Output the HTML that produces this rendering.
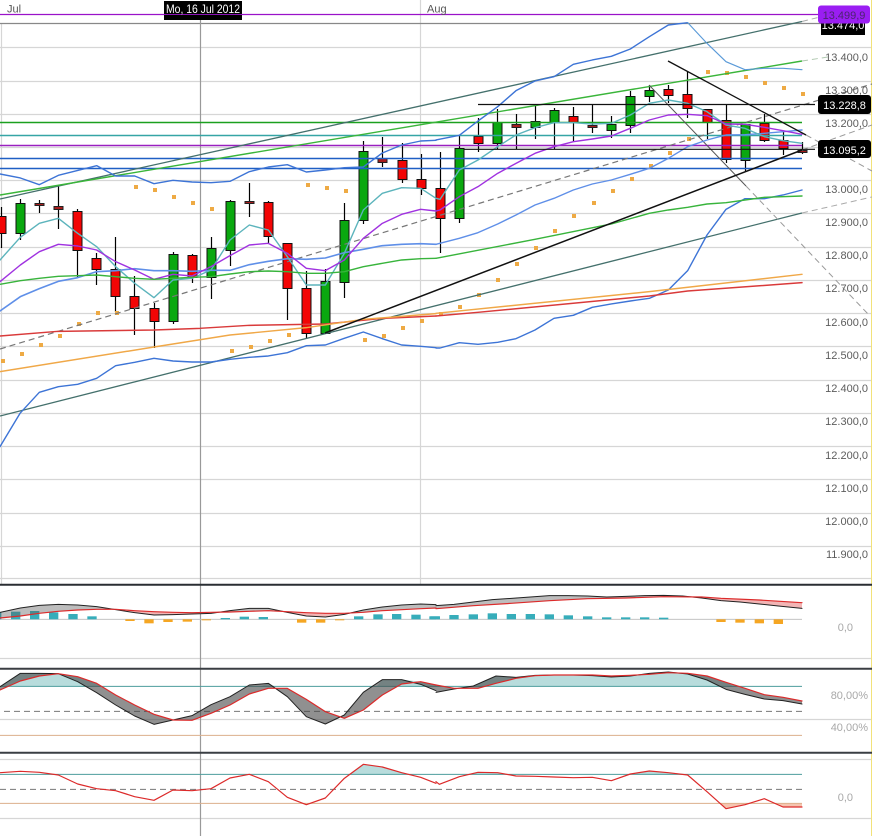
<!DOCTYPE html>
<html>
<head>
<meta charset="utf-8">
<style>
html,body{margin:0;padding:0;background:#fff;width:872px;height:836px;overflow:hidden}
svg{display:block;font-family:"Liberation Sans",sans-serif}
.a{fill:#5c5c5c;font-size:11px;text-anchor:end}
.b{fill:#a8a8a8;font-size:11px;text-anchor:end}
.l{fill:none;stroke-linejoin:round;stroke-linecap:round}
</style>
</head>
<body>
<svg width="872" height="836" viewBox="0 0 872 836">
<rect width="872" height="836" fill="#fff"/>
<!-- grid -->
<path stroke="#d6d6d6" stroke-width="1.2" fill="none" d="M0 47.5H872M0 81.5H872M0 114.5H872M0 147.5H872M0 180.5H872M0 213.5H872M0 247.5H872M0 280.5H872M0 313.5H872M0 346.5H872M0 380.5H872M0 413.5H872M0 446.5H872M0 479.5H872M0 513.5H872M0 546.5H872M0 578.5H872M0 658.5H872M0 719.5H872M0 759.5H872M0 818.5H872M1.5 24V584M420.5 0V584"/>
<path stroke="#f2e27a" d="M871.5 0V836"/>
<path fill="none" stroke="#888" stroke-width="1.2" d="M0 23.5H822"/>
<!-- crosshair -->
<path stroke="#999" stroke-width="1.2" d="M200.5 20V836"/>
<!-- candles -->
<path stroke="#000" stroke-width="1.2" fill="none" d="M1.5 207V248M20.5 199V240M39.5 200V213M58.5 185V229M77.5 209V278M96.5 253V285M115.5 237V312M134.5 276V335M154.5 303V348M173.5 252V324M192.5 254V283M211.5 237V299M230.5 200V266M249.5 183V217M268.5 201V243M287.5 243V320M306.5 271V338M325.5 269V333M344.5 203V298M363.5 141V224M382.5 137V167M402.5 143V183M421.5 154V195M440.5 152V253M459.5 136V223M478.5 118V152M497.5 109V149M516.5 114V149M535.5 105V139M554.5 108V149M573.5 107V142M592.5 105V133M611.5 116V138M630.5 91V133M649.5 85V102M668.5 85V103M687.5 71V118M707.5 109V139M726.5 104V163M745.5 124V172M764.5 114V142M783.5 132V155M802.5 142V154"/>
<g fill="#f30505" stroke="#111">
<rect x="-3" y="216.5" width="9" height="17"/><rect x="73" y="211.5" width="9" height="39"/><rect x="92" y="258.5" width="9" height="11"/><rect x="111" y="269.5" width="9" height="27"/><rect x="130" y="296.5" width="9" height="12"/><rect x="150" y="308.5" width="9" height="13"/><rect x="188" y="255.5" width="9" height="22"/><rect x="264" y="202.5" width="9" height="34"/><rect x="283" y="243.5" width="9" height="45"/><rect x="302" y="288.5" width="9" height="45"/><rect x="398" y="160.5" width="9" height="19"/><rect x="417" y="179.5" width="9" height="9"/><rect x="436" y="188.5" width="9" height="30"/><rect x="474" y="136.5" width="9" height="7"/><rect x="569" y="116.5" width="9" height="6"/><rect x="664" y="89.5" width="9" height="6"/><rect x="683" y="94.5" width="9" height="14"/><rect x="703" y="109.5" width="9" height="13"/><rect x="722" y="120.5" width="9" height="39"/><rect x="760" y="123.5" width="9" height="17"/><rect x="779" y="140.5" width="9" height="8"/>
</g>
<g fill="#0aa80f" stroke="#111">
<rect x="16" y="203.5" width="9" height="30"/><rect x="169" y="254.5" width="9" height="67"/><rect x="207" y="248.5" width="9" height="29"/><rect x="226" y="201.5" width="9" height="49"/><rect x="321" y="281.5" width="9" height="52"/><rect x="340" y="220.5" width="9" height="62"/><rect x="359" y="151.5" width="9" height="69"/><rect x="455" y="148.5" width="9" height="70"/><rect x="493" y="122.5" width="9" height="21"/><rect x="531" y="121.5" width="9" height="6"/><rect x="550" y="110.5" width="9" height="12"/><rect x="607" y="124.5" width="9" height="6"/><rect x="626" y="96.5" width="9" height="29"/><rect x="645" y="90.5" width="9" height="6"/><rect x="741" y="124.5" width="9" height="36"/>
</g>
<g fill="#a81c1c" stroke="#222">
<rect x="35" y="203.5" width="9" height="2"/><rect x="54" y="206.5" width="9" height="3"/><rect x="245" y="201.5" width="9" height="2"/><rect x="378" y="158.5" width="9" height="4"/><rect x="512" y="124.5" width="9" height="3"/><rect x="588" y="125.5" width="9" height="2"/><rect x="798" y="150.5" width="9" height="2"/>
</g>
<!-- horizontal lines -->
<path fill="none" stroke="#1f5fc4" stroke-width="1.4" d="M0 158.5H802M0 168.5H802"/>
<path fill="none" stroke="#1ba01f" stroke-width="1.4" d="M0 122.5H802"/>
<path fill="none" stroke="#35a5a5" stroke-width="1.4" d="M0 135.5H802"/>
<path fill="none" stroke="#9a20c0" stroke-width="1.4" d="M0 145.5H802"/>
<!-- parabolic dots -->
<g fill="#eeaa44">
<rect x="1" y="359" width="4" height="4"/><rect x="20" y="352" width="4" height="4"/><rect x="39" y="343" width="4" height="4"/><rect x="58" y="334" width="4" height="4"/><rect x="77" y="322" width="4" height="4"/><rect x="96" y="311" width="4" height="4"/><rect x="115" y="311" width="4" height="4"/><rect x="134" y="185" width="4" height="4"/><rect x="153" y="188" width="4" height="4"/><rect x="172" y="195" width="4" height="4"/><rect x="191" y="201" width="4" height="4"/><rect x="210" y="207" width="4" height="4"/><rect x="230" y="349" width="4" height="4"/><rect x="249" y="345" width="4" height="4"/><rect x="268" y="339" width="4" height="4"/><rect x="287" y="333" width="4" height="4"/><rect x="306" y="183" width="4" height="4"/><rect x="325" y="186" width="4" height="4"/><rect x="344" y="189" width="4" height="4"/><rect x="363" y="338" width="4" height="4"/><rect x="382" y="334" width="4" height="4"/><rect x="401" y="326" width="4" height="4"/><rect x="420" y="319" width="4" height="4"/><rect x="439" y="312" width="4" height="4"/><rect x="458" y="305" width="4" height="4"/><rect x="477" y="293" width="4" height="4"/><rect x="496" y="278" width="4" height="4"/><rect x="515" y="262" width="4" height="4"/><rect x="534" y="246" width="4" height="4"/><rect x="553" y="229" width="4" height="4"/><rect x="572" y="214" width="4" height="4"/><rect x="592" y="201" width="4" height="4"/><rect x="611" y="189" width="4" height="4"/><rect x="630" y="177" width="4" height="4"/><rect x="649" y="164" width="4" height="4"/><rect x="668" y="151" width="4" height="4"/><rect x="687" y="137" width="4" height="4"/><rect x="706" y="70" width="4" height="4"/><rect x="725" y="71" width="4" height="4"/><rect x="744" y="75" width="4" height="4"/><rect x="763" y="81" width="4" height="4"/><rect x="782" y="86" width="4" height="4"/><rect x="801" y="92" width="4" height="4"/>
</g>
<!-- sloped channels -->
<g fill="none">
<path stroke="#44706c" stroke-width="1.3" d="M0 199L802 21.5"/>
<path stroke="#aaa" stroke-dasharray="6 4" d="M802 21.5L820 17"/>
<path stroke="#44706c" stroke-width="1.3" d="M0 416L802 213"/>
<path stroke="#aaa" stroke-dasharray="6 4" d="M802 213L872 197"/>
<path stroke="#3ab53a" stroke-width="1.4" d="M0 195L802 61"/>
<path stroke="#b0c8b0" stroke-dasharray="6 4" d="M802 61L828 57"/>
<path stroke="#777" stroke-width="1.2" stroke-dasharray="6 4" d="M0 349L872 84"/>
<path stroke="#999" stroke-dasharray="6 4" d="M802 150L872 125"/>
<path stroke="#999" stroke-dasharray="6 4" d="M806 135L872 171"/>
<path stroke="#999" stroke-dasharray="6 4" d="M746 186L869 315"/>
<path stroke="#555" d="M649 85L746 186"/>
</g>
<!-- moving averages, top-left coordinates in 3x zoom space -->
<g transform="scale(.33333)" class="l" stroke-width="4.2">
<polyline class="l" stroke="#3d74d6" points="0,522 61,534 118,554 175,526 290,497 347,528 404,528 462,551 519,541 576,546 633,548 690,544 748,515 805,501 862,494 919,516 976,510 1033,503 1090,501 1147,459 1205,435 1262,423 1308,421"/>
<polyline class="l" stroke="#3d74d6" points="0,1340 60,1240 118,1177 175,1160 233,1153 290,1135 347,1097 404,1087 462,1075 519,1083 576,1086 633,1086 690,1078 748,1072 805,1068 862,1058 919,1037 976,1035 1033,1015 1090,996 1147,1016 1205,1035 1262,1039 1308,1043"/>
<polyline class="l" stroke="#5f8fe8" stroke-width="4.8" points="0,933 61,890 118,866 175,844 233,833 290,815 347,812 404,806 462,812 519,812 576,814 633,811 690,811 748,794 805,784 862,776 919,778 976,774 1033,758 1090,748 1147,737 1205,733 1262,731 1308,733"/>
<polyline class="l" stroke="#5cb4bc" points="0,780 61,712 118,670 175,655 233,700 290,740 347,800 404,850 462,893 519,840 576,835 633,810 690,720 748,675 805,690 862,770 919,855 976,855 1033,760 1090,630 1147,580 1205,563 1262,565 1308,595"/>
<polyline class="l" stroke="#a032e0" points="0,845 61,795 118,755 175,733 233,738 290,750 347,785 404,810 462,838 519,823 576,828 633,800 690,767 748,735 805,730 862,760 919,805 976,812 1033,780 1090,715 1147,670 1205,643 1262,628 1308,633"/>
<polyline class="l" stroke="#38b43c" points="0,853 61,842 118,835 175,829 233,827 290,825 347,830 404,835 462,838 519,835 576,832 633,830 690,822 748,815 805,813 862,815 919,820 976,820 1033,815 1090,800 1147,790 1205,780 1262,776 1308,775"/>
<polyline class="l" stroke="#d93a3a" stroke-width="4.4" points="0,1008 175,994 462,990 600,985 748,976 976,972 1147,955 1308,948"/>
<polyline class="l" stroke="#f0a848" stroke-width="4.4" points="0,1115 462,1041 690,1005 919,983 1090,958 1308,941"/>
</g>
<g transform="translate(436,0) scale(.33333)" class="l" stroke-width="4.2">
<polyline class="l" stroke="#3d74d6" points="0,420 70,406 126,363 185,320 240,272 297,243 354,230 412,193 469,180 526,169 583,147 640,110 697,75 755,68"/>
<polyline class="l" stroke="#5a9ad8" stroke-width="3.4" points="755,68 813,130 870,185 927,209 985,205 1041,205 1098,209"/>
<polyline class="l" stroke="#3d74d6" points="0,1044 12,1044 70,1028 126,1033 185,1027 240,1016 297,990 354,955 412,946 469,922 526,912 583,903 640,895 697,870 755,812 813,705 870,628 927,596 985,596 1041,585 1098,570"/>
<polyline class="l" stroke="#5f8fe8" points="0,733 70,715 126,698 185,672 240,645 297,615 354,595 412,570 469,552 526,540 583,523 640,505 697,475 755,440 813,420 870,405 927,404 985,400 1041,395 1098,390"/>
<polyline class="l" stroke="#5cb4bc" points="0,595 12,598 70,510 126,480 185,440 240,405 297,383 354,368 412,368 469,372 526,370 583,345 640,310 697,300 755,310 813,335 870,375 927,385 985,410 1041,422 1098,430"/>
<polyline class="l" stroke="#a032e0" points="0,633 12,630 70,590 126,560 185,520 240,490 297,460 354,440 412,425 469,417 526,408 583,385 640,360 697,345 755,343 813,347 870,372 927,373 985,382 1041,392 1098,403"/>
<polyline class="l" stroke="#38b43c" points="0,775 297,718 526,672 640,640 697,630 755,622 813,612 870,608 985,592 1098,588"/>
<polyline class="l" stroke="#f0a848" stroke-width="4.4" points="0,940 640,875 1098,823"/>
<polyline class="l" stroke="#d93a3a" stroke-width="4.4" points="0,948 126,937 640,888 755,873 1098,848"/>
</g>
<!-- trend lines -->
<g fill="none" stroke="#111">
<path stroke-width="1.5" d="M325 333L802 150"/>
<path stroke-width="1.3" d="M668 61L806 135"/>
<path stroke-width="1.2" d="M478 104.5H815M464 149.3H815"/>
</g>
<!-- top line over all -->
<path stroke="#9a12c9" stroke-width="1.3" d="M0 14.5H825"/>
<!-- panel separators -->
<path stroke="#2a2e33" stroke-width="2" d="M0 584.7H872"/>
<path stroke="#3a3e43" stroke-width="2" d="M0 668.7H872M0 752.7H872"/>
<!-- MACD panel -->
<g transform="translate(0,570) scale(.33333)">
<path stroke="#bbb" stroke-width="2.6" d="M0 148H1308"/>
<g fill="#37adba">
<rect x="-10" y="126" width="14" height="22"/><rect x="33" y="125" width="28" height="23"/><rect x="90" y="123" width="28" height="25"/><rect x="147" y="127" width="28" height="21"/><rect x="205" y="132" width="28" height="16"/><rect x="262" y="139" width="28" height="9"/><rect x="662" y="144" width="28" height="4"/><rect x="719" y="140" width="28" height="8"/><rect x="776" y="141" width="28" height="7"/><rect x="1062" y="139" width="28" height="9"/><rect x="1120" y="133" width="28" height="15"/><rect x="1176" y="132" width="28" height="16"/><rect x="1234" y="134" width="28" height="14"/><rect x="1291" y="139" width="28" height="9"/>
</g>
<g fill="#f5a623">
<rect x="376" y="148" width="28" height="5"/><rect x="433" y="148" width="28" height="12"/><rect x="490" y="148" width="28" height="8"/><rect x="548" y="148" width="28" height="7"/><rect x="605" y="148" width="28" height="3"/><rect x="891" y="148" width="28" height="10"/><rect x="948" y="148" width="28" height="10"/><rect x="1005" y="148" width="28" height="3"/>
</g>
<g fill="rgba(90,90,90,.4)">
<polygon points="0,127 61,114 118,106 175,103 233,105 290,110 330,117 290,118 233,120 175,124 118,130 61,138 0,144"/>
<polygon points="650,126 690,122 748,115 805,115 845,122 805,122 748,124 690,126"/>
<polygon points="1050,129 1090,120 1147,111 1205,105 1262,102 1308,104 1308,114 1262,116 1205,119 1147,122 1090,127"/>
</g>
<g fill="#f2b5b5">
<polygon points="335,118 347,119 404,128 462,135 519,134 576,132 633,130 650,127 633,127 576,128 519,127 462,125 404,122 347,118"/>
<polygon points="845,122 862,127 919,138 976,141 1033,133 1050,129 1033,130 976,130 919,128 862,125"/>
</g>
<polyline class="l" stroke="#222" stroke-width="3" points="0,127 61,114 118,106 175,103 233,105 290,110 347,119 404,128 462,135 519,134 576,132 633,130 690,122 748,115 805,115 862,127 919,138 976,141 1033,133 1090,120 1147,111 1205,105 1262,102 1308,104"/>
<polyline class="l" stroke="#dc2a2a" stroke-width="3.6" points="0,144 61,138 118,130 175,124 233,120 290,118 347,118 404,122 462,125 519,127 576,128 633,127 690,126 748,124 805,122 862,125 919,128 976,130 1033,130 1090,127 1147,122 1205,119 1262,116 1308,114"/>
</g>
<g transform="translate(436,570) scale(.33333)">
<path stroke="#bbb" stroke-width="2.6" d="M0 148H1098"/>
<g fill="#37adba">
<rect x="-20" y="139" width="32" height="9"/><rect x="40" y="135" width="28" height="13"/><rect x="98" y="133" width="28" height="15"/><rect x="155" y="130" width="28" height="18"/><rect x="212" y="132" width="28" height="16"/><rect x="269" y="132" width="28" height="16"/><rect x="326" y="133" width="28" height="15"/><rect x="383" y="136" width="28" height="12"/><rect x="441" y="139" width="28" height="9"/><rect x="498" y="142" width="28" height="6"/><rect x="555" y="142" width="28" height="6"/><rect x="612" y="142" width="28" height="6"/><rect x="669" y="143" width="28" height="5"/>
</g>
<g fill="#f5a623">
<rect x="841" y="148" width="28" height="8"/><rect x="898" y="148" width="28" height="10"/><rect x="956" y="148" width="28" height="12"/><rect x="1013" y="148" width="28" height="14"/>
</g>
<polygon fill="rgba(90,90,90,.4)" points="0,107 54,103 112,96 169,89 226,85 283,81 340,77 397,77 455,78 512,81 569,79 626,77 683,76 740,78 760,80 683,80 569,84 455,86 340,92 226,100 112,107 0,116"/>
<polygon fill="#f2b5b5" points="760,80 797,84 855,92 912,96 970,102 1027,108 1098,115 1098,98 970,90 855,85 797,81"/>
<polyline class="l" stroke="#222" stroke-width="3" points="0,107 54,103 112,96 169,89 226,85 283,81 340,77 397,77 455,78 512,81 569,79 626,77 683,76 740,78 797,84 855,92 912,96 970,102 1027,108 1098,115"/>
<polyline class="l" stroke="#dc2a2a" stroke-width="3.6" points="0,116 112,107 226,100 340,92 455,86 569,84 683,80 797,81 855,85 970,90 1098,98"/>
</g>
<!-- Stochastic panel -->
<g transform="translate(0,570) scale(.33333)">
<g fill="#b8dcdc">
<polygon points="0,349 61,310 118,310 175,311 233,320 290,340 305,349"/>
<polygon points="780,349 805,340 825,349"/>
<polygon points="1130,349 1147,329 1205,329 1262,335 1308,345 1308,349"/>
</g>
<path stroke="#4d9d9d" stroke-width="3" d="M0 349H1308"/>
<path stroke="#777" stroke-width="3" stroke-dasharray="18 12" d="M12 424H1308"/>
<path stroke="#dcaf8c" stroke-width="3" d="M0 496H1308"/>
<polygon fill="rgba(70,70,70,.6)" points="0,350 61,310 118,310 175,311 233,335 290,368 347,405 404,438 462,463 519,450 576,437 633,404 690,380 748,345 805,340 862,380 919,440 976,462 1033,435 1090,367 1147,329 1205,329 1262,343 1308,362 1308,345 1262,335 1205,342 1147,375 1090,420 1033,445 976,425 919,388 862,355 805,355 748,372 690,405 633,430 576,451 519,450 462,433 404,405 347,375 290,340 233,320 175,311 118,318 61,333 0,360"/>
<polyline class="l" stroke="#222" stroke-width="3" points="0,350 61,310 118,310 175,311 233,335 290,368 347,405 404,438 462,463 519,450 576,437 633,404 690,380 748,345 805,340 862,380 919,440 976,462 1033,435 1090,367 1147,329 1205,329 1262,343 1308,362"/>
<polyline class="l" stroke="#dc2a2a" stroke-width="3.6" points="0,360 61,333 118,318 175,311 233,320 290,340 347,375 404,405 462,433 519,450 576,451 633,430 690,405 748,372 805,355 862,355 919,388 976,425 1033,445 1090,420 1147,375 1205,342 1262,335 1308,345"/>
</g>
<g transform="translate(436,570) scale(.33333)">
<polygon fill="#b8dcdc" points="115,349 180,318 240,322 297,316 354,315 412,315 469,315 526,318 583,316 640,310 697,306 755,310 813,318 870,337 893,349"/>
<path stroke="#4d9d9d" stroke-width="3" d="M0 349H1098"/>
<path stroke="#777" stroke-width="3" stroke-dasharray="18 12" d="M0 424H1098"/>
<path stroke="#dcaf8c" stroke-width="3" d="M0 496H1098"/>
<polygon fill="rgba(70,70,70,.6)" points="0,367 54,357 112,348 180,318 240,322 297,316 354,315 412,315 469,317 526,321 583,318 640,310 697,306 755,312 813,330 870,358 927,373 985,387 1041,392 1098,402 1098,393 1041,382 985,374 927,355 870,337 813,318 755,310 697,308 640,313 583,316 526,318 469,315 412,315 354,315 297,317 240,325 180,340 126,355 54,355 0,345"/>
<polyline class="l" stroke="#222" stroke-width="3" points="0,367 54,357 112,348 180,318 240,322 297,316 354,315 412,315 469,317 526,321 583,318 640,310 697,306 755,312 813,330 870,358 927,373 985,387 1041,392 1098,402"/>
<polyline class="l" stroke="#dc2a2a" stroke-width="3.6" points="0,345 54,355 126,355 180,340 240,325 297,317 354,315 412,315 469,315 526,318 583,316 640,313 697,308 755,310 813,318 870,337 927,355 985,374 1041,382 1098,393"/>
</g>
<!-- CCI panel -->
<g transform="translate(0,570) scale(.33333)">
<polygon fill="#b8dcdc" points="1050,613 1090,583 1147,591 1205,608 1222,613"/>
<path stroke="#4d9d9d" stroke-width="3" d="M0 613H1308"/>
<path stroke="#777" stroke-width="3" stroke-dasharray="18 12" d="M0 658H1308"/>
<path stroke="#dcaf8c" stroke-width="3" d="M0 700H1308"/>
<polyline class="l" stroke="#dc2a2a" stroke-width="3.6" points="0,608 61,604 118,607 175,615 233,642 290,656 347,662 404,680 462,691 519,660 576,662 633,656 690,624 748,613 805,635 862,682 919,704 976,684 1033,625 1090,583 1147,591 1205,608 1262,622 1308,640"/>
</g>
<g transform="translate(436,570) scale(.33333)">
<polygon fill="#f6c4b0" points="852,700 870,716 927,704 945,700"/>
<polygon fill="#f6c4b0" points="1015,700 1041,711 1098,711 1098,700"/>
<polygon fill="#b8dcdc" points="90,613 126,607 185,608 210,613"/>
<polygon fill="#b8dcdc" points="590,613 640,603 697,608 755,613"/>
<path stroke="#4d9d9d" stroke-width="3" d="M0 613H1098"/>
<path stroke="#777" stroke-width="3" stroke-dasharray="18 12" d="M0 658H1098"/>
<path stroke="#dcaf8c" stroke-width="3" d="M0 700H1098"/>
<polyline class="l" stroke="#dc2a2a" stroke-width="3.6" points="0,635 10,643 70,620 126,607 185,608 240,618 297,619 354,621 412,623 469,622 526,632 583,612 640,603 697,608 755,615 813,665 870,716 927,704 985,686 1041,711 1098,711"/>
</g>
<!-- price labels -->
<text class="a" x="868" y="61">13.400,0</text>
<text class="a" x="868" y="94">13.300,0</text>
<text class="a" x="868" y="127">13.200,0</text>
<text class="a" x="868" y="193">13.000,0</text>
<text class="a" x="868" y="226">12.900,0</text>
<text class="a" x="868" y="259">12.800,0</text>
<text class="a" x="868" y="292">12.700,0</text>
<text class="a" x="868" y="326">12.600,0</text>
<text class="a" x="868" y="359">12.500,0</text>
<text class="a" x="868" y="392">12.400,0</text>
<text class="a" x="868" y="425">12.300,0</text>
<text class="a" x="868" y="459">12.200,0</text>
<text class="a" x="868" y="492">12.100,0</text>
<text class="a" x="868" y="525">12.000,0</text>
<text class="a" x="868" y="558">11.900,0</text>
<text class="b" x="853" y="631">0,0</text>
<text class="b" x="868" y="699">80,00%</text>
<text class="b" x="868" y="731">40,00%</text>
<text class="b" x="853" y="801">0,0</text>
<!-- black labels -->
<rect x="821" y="20" width="44" height="15" fill="#000"/>
<text x="843" y="29" fill="#fff" font-size="11" text-anchor="middle">13.474,0</text>
<rect x="818" y="5.5" width="52" height="18" rx="3" fill="#9a1ef2"/>
<text x="844" y="19" fill="#4c2470" font-size="11" text-anchor="middle">13.499,9</text>
<rect x="818" y="95" width="53" height="19" rx="3" fill="#000"/>
<text x="844.5" y="109" fill="#fff" font-size="11" text-anchor="middle">13.228,8</text>
<rect x="818" y="140" width="53" height="18" rx="3" fill="#000"/>
<text x="844.5" y="154" fill="#fff" font-size="11" text-anchor="middle">13.095,2</text>
<!-- time axis -->
<text x="7" y="12.5" fill="#555" font-size="11">Jul</text>
<text x="427" y="12.5" fill="#555" font-size="11">Aug</text>
<rect x="164" y="1" width="78" height="19" fill="#000"/>
<path stroke="#8a12b5" d="M164 14.5H242"/>
<text x="203" y="13" fill="#fff" font-size="12" text-anchor="middle" textLength="74" lengthAdjust="spacingAndGlyphs">Mo, 16 Jul 2012</text>
</svg>
</body>
</html>
